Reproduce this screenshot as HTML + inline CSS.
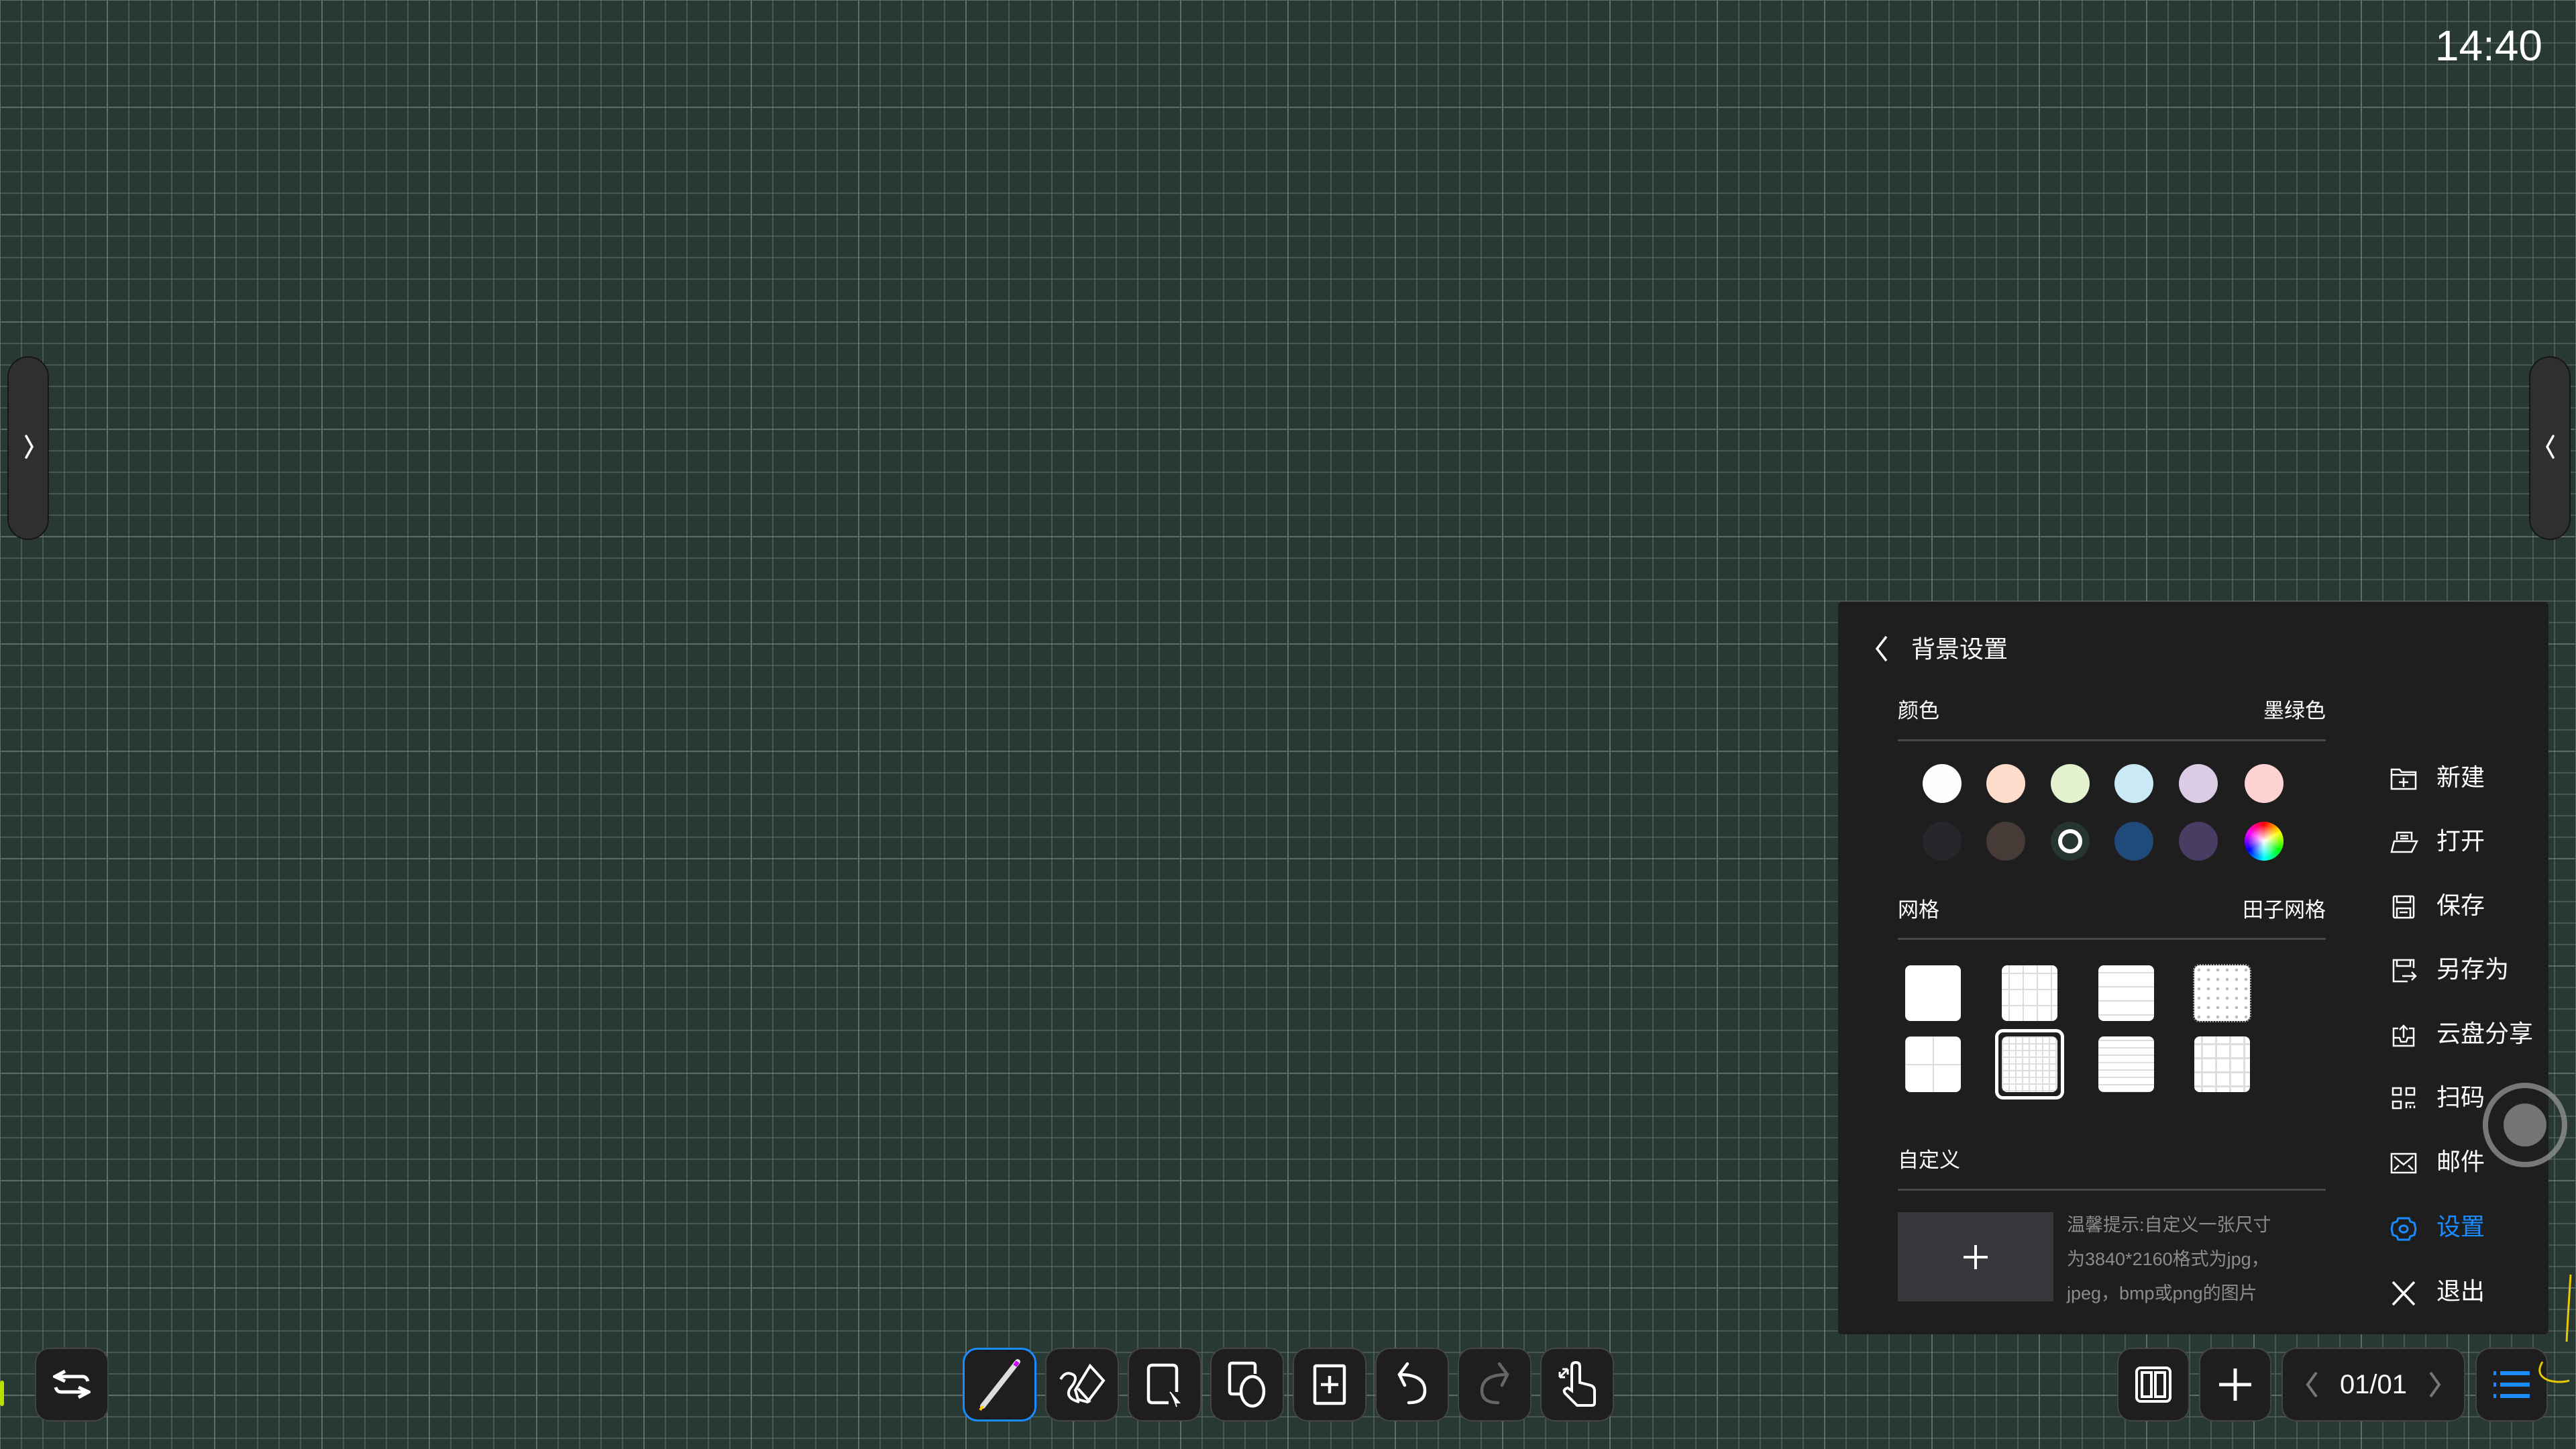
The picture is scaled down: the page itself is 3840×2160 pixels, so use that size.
<!DOCTYPE html>
<html><head><meta charset="utf-8"><style>
*{margin:0;padding:0;box-sizing:border-box}
body{width:3840px;height:2160px;overflow:hidden;position:relative;font-family:"Liberation Sans","Noto Sans CJK SC",sans-serif;color:#fff;
background-color:#283833;
background-image:
linear-gradient(to right,#5e6c67 2px,transparent 2px),
linear-gradient(to bottom,#5e6c67 2px,transparent 2px),
linear-gradient(to right,#48574f 2px,transparent 2px),
linear-gradient(to bottom,#48574f 2px,transparent 2px);
background-size:160px 160px,160px 160px,32px 32px,32px 32px;
background-position:159px 0,0 159px,31px 0,0 31px;}
.abs{position:absolute}
.tab{position:absolute;top:531px;width:62px;height:274px;border-radius:31px;background:#2f2f2f;border:2px solid #161616}
.btn{position:absolute;top:2009px;height:110px;background:#1e1e1e;border:2px solid #444;border-radius:22px;display:flex;align-items:center;justify-content:center}
.panel{position:absolute;left:2740px;top:897px;width:1059px;height:1092px;background:#1e1e1e;border-radius:6px}
.t{position:absolute;white-space:nowrap;line-height:1}
.hr{position:absolute;left:2829px;width:638px;height:3px;background:#48484f}
.dot{position:absolute;width:58px;height:58px;border-radius:50%}
.tile{position:absolute;width:83px;height:83px;background:#fff;border-radius:8px}
.mi{position:absolute;left:3632px;font-size:36px;line-height:1}
.ic{position:absolute;left:3563px}
</style></head><body>

<div class="t" style="right:50px;top:36px;font-size:64px">14:40</div>

<div class="tab" style="left:11px"><svg class="abs" style="left:21px;top:113px" width="20" height="40"><path d="M5 4 L14 20 L5 36" stroke="#fff" stroke-width="3.5" fill="none" stroke-linecap="round"/></svg></div>
<div class="tab" style="left:3770px"><svg class="abs" style="left:19px;top:113px" width="20" height="40"><path d="M15 4 L6 20 L15 36" stroke="#fff" stroke-width="3.5" fill="none" stroke-linecap="round"/></svg></div>

<div class="abs" style="left:0;top:2058px;width:6px;height:38px;background:#b6e000;border-radius:3px"></div>

<div class="btn" style="left:52px;width:110px"><svg width="56" height="46" viewBox="0 0 56 46"><path d="M2 11 H44 Q50 11 52 18 M18 3 L3 11 L18 18" stroke="#fff" stroke-width="5" fill="none"/><path d="M54 34 H12 Q6 34 4 27 M38 27 L53 34 L38 42" stroke="#fff" stroke-width="5" fill="none"/></svg></div>

<!-- toolbar -->
<div class="btn" style="left:1435px;width:110px;border:3px solid #1a8cff"><svg width="70" height="80" viewBox="0 0 70 80"><path d="M62 6 L10 72" stroke="#ddd" stroke-width="8" stroke-linecap="round"/><path d="M62 6 L58 12" stroke="#c0f" stroke-width="6"/><path d="M10 72 L6 78" stroke="#fc0" stroke-width="4"/></svg></div>
<div class="btn" style="left:1558px;width:110px"><svg width="72" height="72" viewBox="0 0 72 72" fill="none" stroke="#fff" stroke-width="4"><path d="M4 28 Q12 14 24 22 Q30 28 18 42 Q10 56 32 62"/><path d="M48 8 L68 30 L44 62 L30 58 L26 44 Z M30 42 L48 62"/></svg></div>
<div class="btn" style="left:1681px;width:110px"><svg width="60" height="70" viewBox="0 0 60 70" fill="none" stroke="#fff" stroke-width="4.5"><path d="M36 62 H12 Q6 62 6 56 V12 Q6 6 12 6 H42 Q48 6 48 12 V46"/><path d="M38 46 L52 62 L46 62 L48 68" fill="#fff" stroke-width="2"/></svg></div>
<div class="btn" style="left:1804px;width:110px"><svg width="64" height="72" viewBox="0 0 64 72" fill="none" stroke="#fff" stroke-width="4.5"><path d="M22 50 H10 Q6 50 6 46 V8 Q6 4 10 4 H40 Q44 4 44 8 V20"/><ellipse cx="40" cy="46" rx="17" ry="22"/></svg></div>
<div class="btn" style="left:1927px;width:110px"><svg width="50" height="62" viewBox="0 0 50 62" fill="none" stroke="#fff" stroke-width="4.5"><rect x="3" y="3" width="44" height="56" rx="2"/><path d="M25 18 V44 M12 31 H38"/></svg></div>
<div class="btn" style="left:2050px;width:110px"><svg width="50" height="70" viewBox="0 0 50 70" fill="none" stroke="#fff" stroke-width="4.5" stroke-linecap="round"><path d="M18 4 L6 20 L14 36"/><path d="M6 20 Q44 20 44 44 Q44 62 20 62"/></svg></div>
<div class="btn" style="left:2173px;width:110px"><svg width="50" height="70" viewBox="0 0 50 70" fill="none" stroke="#666" stroke-width="4.5" stroke-linecap="round"><path d="M32 4 L44 20 L36 36"/><path d="M44 20 Q6 20 6 44 Q6 62 30 62"/></svg></div>
<div class="btn" style="left:2296px;width:110px"><svg width="60" height="70" viewBox="0 0 60 70" fill="none" stroke="#fff" stroke-width="4"><path d="M22 44 V8 Q22 2 28 2 Q34 2 34 8 V32 L50 36 Q56 38 56 44 V62 Q56 66 52 66 H30 L12 48 Q8 42 16 40 Z"/><path d="M4 24 L16 12 M4 24 V16 M4 24 H12 M16 12 H8 M16 12 V20" stroke-width="3"/></svg></div>

<!-- bottom right -->
<div class="btn" style="left:3156px;width:108px"><svg width="56" height="56" viewBox="0 0 56 56" fill="none" stroke="#fff" stroke-width="4"><rect x="3" y="3" width="50" height="50" rx="6"/><rect x="11" y="10" width="14" height="36"/><rect x="31" y="10" width="14" height="36"/></svg></div>
<div class="btn" style="left:3278px;width:108px"><svg width="52" height="52" viewBox="0 0 52 52" stroke="#fff" stroke-width="5"><path d="M26 2 V50 M2 26 H50"/></svg></div>
<div class="btn" style="left:3401px;width:274px;justify-content:space-between;padding:0 32px"><svg width="22" height="44" viewBox="0 0 22 44"><path d="M18 4 L5 22 L18 40" stroke="#777" stroke-width="4" fill="none"/></svg><span style="font-size:40px">01/01</span><svg width="22" height="44" viewBox="0 0 22 44"><path d="M4 4 L17 22 L4 40" stroke="#777" stroke-width="4" fill="none"/></svg></div>
<div class="btn" style="left:3690px;width:108px"><svg width="54" height="44" viewBox="0 0 54 44" fill="#1a8cff"><rect x="0" y="2" width="4" height="6"/><rect x="10" y="2" width="44" height="6"/><rect x="0" y="19" width="4" height="6"/><rect x="10" y="19" width="44" height="6"/><rect x="0" y="36" width="4" height="6"/><rect x="10" y="36" width="44" height="6"/></svg></div>

<!-- panel -->
<div class="panel"></div>
<svg class="abs" style="left:2792px;top:946px" width="26" height="42"><path d="M20 3 L6 21 L20 39" stroke="#fff" stroke-width="3.5" fill="none"/></svg>
<div class="t" style="left:2849px;top:950px;font-size:36px">背景设置</div>

<div class="t" style="left:2829px;top:1044px;font-size:31px">颜色</div>
<div class="t" style="left:3372px;top:1044px;font-size:31px;width:95px;text-align:right">墨绿色</div>
<div class="hr" style="top:1102px"></div>

<div class="dot" style="left:2866px;top:1139px;background:#fdfdfd"></div>
<div class="dot" style="left:2961px;top:1139px;background:#fddccc"></div>
<div class="dot" style="left:3057px;top:1139px;background:#e3f1cc"></div>
<div class="dot" style="left:3152px;top:1139px;background:#c9e9f5"></div>
<div class="dot" style="left:3248px;top:1139px;background:#dccbe4"></div>
<div class="dot" style="left:3346px;top:1139px;background:#fcd2d2"></div>
<div class="dot" style="left:2866px;top:1225px;background:#26272b"></div>
<div class="dot" style="left:2961px;top:1225px;background:#473b37"></div>
<div class="dot" style="left:3057px;top:1225px;background:#27352f"><div style="position:absolute;left:11px;top:11px;width:36px;height:36px;border-radius:50%;border:6px solid #fff"></div></div>
<div class="dot" style="left:3152px;top:1225px;background:#204a7a"></div>
<div class="dot" style="left:3248px;top:1225px;background:#4a3d64"></div>
<div class="dot" style="left:3346px;top:1225px;background:radial-gradient(circle,#fff 0,rgba(255,255,255,0) 60%),conic-gradient(#f00,#ff0,#0f0,#0ff,#00f,#f0f,#f00)"></div>

<div class="t" style="left:2829px;top:1341px;font-size:31px">网格</div>
<div class="t" style="left:3340px;top:1341px;font-size:31px;width:127px;text-align:right">田子网格</div>
<div class="hr" style="top:1398px"></div>

<div class="tile" style="left:2840px;top:1439px"></div>
<div class="tile" style="left:2984px;top:1439px;background-color:#fff;background-image:linear-gradient(to right,#ddd 2px,transparent 2px),linear-gradient(to bottom,#ddd 2px,transparent 2px);background-size:21px 24px;background-position:10px 0,0 11px"></div>
<div class="tile" style="left:3128px;top:1439px;background-image:linear-gradient(to bottom,#ddd 2px,transparent 2px);background-size:83px 21px;background-position:0 10px"></div>
<div class="tile" style="left:3271px;top:1439px;background-image:radial-gradient(circle,#bbb 2px,transparent 2.5px);background-size:14px 14px;outline:2px dotted #999"></div>
<div class="tile" style="left:2840px;top:1545px;background-image:linear-gradient(to right,#ddd 2px,transparent 2px),linear-gradient(to bottom,#ddd 2px,transparent 2px);background-size:42px 42px;background-position:41px 0,0 41px"></div>
<div class="abs" style="left:2974px;top:1534px;width:103px;height:105px;border:5px solid #fff;border-radius:12px"></div>
<div class="tile" style="left:2984px;top:1545px;background-image:linear-gradient(to right,#ddd 2px,transparent 2px),linear-gradient(to bottom,#ddd 2px,transparent 2px);background-size:10px 10px"></div>
<div class="tile" style="left:3128px;top:1545px;background-image:linear-gradient(to bottom,#ddd 2px,transparent 2px);background-size:83px 11px;background-position:0 5px"></div>
<div class="tile" style="left:3271px;top:1545px;background-image:linear-gradient(to right,#ddd 3px,transparent 3px),linear-gradient(to bottom,#ddd 3px,transparent 3px);background-size:21px 21px;background-position:10px 0,0 10px"></div>

<div class="t" style="left:2829px;top:1714px;font-size:31px">自定义</div>
<div class="hr" style="top:1772px"></div>
<div class="abs" style="left:2829px;top:1807px;width:232px;height:133px;background:#37383c;display:flex;align-items:center;justify-content:center"><svg width="40" height="40"><path d="M20 2 V38 M2 20 H38" stroke="#fff" stroke-width="4"/></svg></div>
<div class="t" style="left:3081px;top:1801px;font-size:27px;color:#8c8c8c;line-height:51px;white-space:normal;width:360px">温馨提示:自定义一张尺寸<br>为3840*2160格式为jpg，<br>jpeg，bmp或png的图片</div>

<!-- menu -->
<svg class="ic" style="top:1143px" width="40" height="36" viewBox="0 0 40 36" fill="none" stroke="#fff" stroke-width="2.5"><path d="M2 4 H14 L17 8 H38 V33 H2 Z M2 12 H38 M20 16 V30 M13 23 H27"/></svg>
<div class="mi" style="top:1141px">新建</div>
<svg class="ic" style="top:1238px" width="42" height="36" viewBox="0 0 42 36" fill="none" stroke="#fff" stroke-width="2.5"><path d="M10 14 V3 H32 V14 M15 8 H27 M15 12 H27 M2 32 L6 16 H40 L32 32 Z"/></svg>
<div class="mi" style="top:1236px">打开</div>
<svg class="ic" style="top:1334px" width="40" height="36" viewBox="0 0 40 36" fill="none" stroke="#fff" stroke-width="2.5"><rect x="5" y="2" width="30" height="32" rx="2"/><path d="M10 2 V11 H30 V2 M10 34 V20 H30 V34 M14 26 H26"/></svg>
<div class="mi" style="top:1332px">保存</div>
<svg class="ic" style="top:1429px" width="40" height="36" viewBox="0 0 40 36" fill="none" stroke="#fff" stroke-width="2.5"><path d="M35 14 V2 H5 V34 H26 M10 2 V11 H30 V2 M18 26 H38 M32 20 L38 26 L32 32"/></svg>
<div class="mi" style="top:1427px">另存为</div>
<svg class="ic" style="top:1525px" width="40" height="36" viewBox="0 0 40 36" fill="none" stroke="#fff" stroke-width="2.5"><path d="M12 8 H5 V34 H35 V8 H28 M5 22 H14 L16 28 H24 L26 22 H35 M20 22 V4 M14 10 L20 4 L26 10"/></svg>
<div class="mi" style="top:1523px">云盘分享</div>
<svg class="ic" style="top:1620px" width="40" height="36" viewBox="0 0 40 36" fill="none" stroke="#fff" stroke-width="2.5"><rect x="4" y="2" width="12" height="10"/><rect x="24" y="2" width="12" height="10"/><rect x="4" y="22" width="12" height="10"/><path d="M24 32 V24 H36 M30 32 V28 M36 32 V28"/></svg>
<div class="mi" style="top:1618px">扫码</div>
<svg class="ic" style="top:1716px" width="40" height="36" viewBox="0 0 40 36" fill="none" stroke="#fff" stroke-width="2.5"><rect x="2" y="4" width="36" height="28"/><path d="M6 8 L20 20 L34 8 M6 28 L13 21 M34 28 L27 21"/></svg>
<div class="mi" style="top:1714px">邮件</div>
<svg class="ic" style="top:1813px" width="40" height="38" viewBox="0 0 40 38" fill="none" stroke="#1a8cff" stroke-width="3"><path d="M12 3 H28 L30 8 L36 10 L38 19 L36 28 L30 30 L28 35 H12 L10 30 L4 28 L2 19 L4 10 L10 8 Z"/><ellipse cx="20" cy="19" rx="6" ry="5"/></svg>
<div class="mi" style="top:1811px;color:#1a8cff">设置</div>
<svg class="ic" style="top:1909px" width="40" height="38" viewBox="0 0 40 38" stroke="#fff" stroke-width="3.5"><path d="M4 2 L36 36 M36 2 L4 36"/></svg>
<div class="mi" style="top:1907px">退出</div>

<div class="abs" style="left:3701px;top:1614px;width:126px;height:126px;border-radius:50%;border:8px solid rgba(150,150,150,.75)"></div>
<div class="abs" style="left:3732px;top:1645px;width:64px;height:64px;border-radius:50%;background:#747474"></div>

<svg class="abs" style="left:3780px;top:1900px" width="60" height="240" fill="none" stroke="#e8c800" stroke-width="3"><path d="M52 0 Q48 60 46 100"/><path d="M10 130 Q-2 150 20 158 Q36 162 50 158"/></svg>
</body></html>
